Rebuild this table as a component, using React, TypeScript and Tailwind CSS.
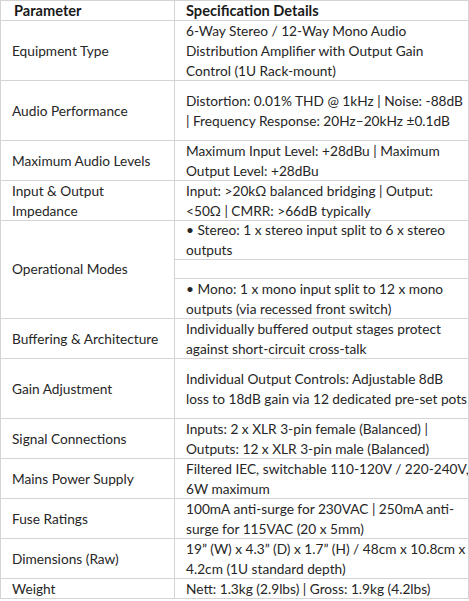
import React from "react";

type Row = { label: React.ReactNode; h: string; lines: string[] };

const rows: Row[] = [
  {
    label: "Equipment Type",
    h: "h-[59px]",
    lines: [
      "6-Way Stereo / 12-Way Mono Audio",
      "Distribution Amplifier with Output Gain",
      "Control (1U Rack-mount)",
    ],
  },
  {
    label: "Audio Performance",
    h: "h-[59px]",
    lines: [
      "Distortion: 0.01% THD @ 1kHz | Noise: -88dB",
      "| Frequency Response: 20Hz\u201320kHz \u00b10.1dB",
    ],
  },
  {
    label: "Maximum Audio Levels",
    h: "h-[39px]",
    lines: ["Maximum Input Level: +28dBu | Maximum", "Output Level: +28dBu"],
  },
  {
    label: (
      <>
        Input &amp; Output
        <br />
        Impedance
      </>
    ),
    h: "h-[39px]",
    lines: [
      "Input: >20k\u03a9 balanced bridging | Output:",
      "<50\u03a9 | CMRR: >66dB typically",
    ],
  },
];

const rows2: Row[] = [
  {
    label: "Buffering & Architecture",
    h: "h-[39px]",
    lines: [
      "Individually buffered output stages protect",
      "against short-circuit cross-talk",
    ],
  },
  {
    label: "Gain Adjustment",
    h: "h-[59px]",
    lines: [
      "Individual Output Controls: Adjustable 8dB",
      "loss to 18dB gain via 12 dedicated pre-set pots",
    ],
  },
  {
    label: "Signal Connections",
    h: "h-[39px]",
    lines: [
      "Inputs: 2 x XLR 3-pin female (Balanced) |",
      "Outputs: 12 x XLR 3-pin male (Balanced)",
    ],
  },
  {
    label: "Mains Power Supply",
    h: "h-[39px]",
    lines: ["Filtered IEC, switchable 110-120V / 220-240V,", "6W maximum"],
  },
  {
    label: "Fuse Ratings",
    h: "h-[39px]",
    lines: [
      "100mA anti-surge for 230VAC | 250mA anti-",
      "surge for 115VAC (20 x 5mm)",
    ],
  },
  {
    label: "Dimensions (Raw)",
    h: "h-[39px]",
    lines: [
      "19\u201d (W) x 4.3\u201d (D) x 1.7\u201d (H) / 48cm x 10.8cm x",
      "4.2cm (1U standard depth)",
    ],
  },
];

function Lines({ lines }: { lines: string[] }) {
  return (
    <div className="whitespace-nowrap">
      {lines.map((l, i) => (
        <div key={i} className="h-[20px] leading-[20px]">
          {l}
        </div>
      ))}
    </div>
  );
}

function TableRow({ r, last }: { r: Row; last?: boolean }) {
  return (
    <div className={`flex ${last ? "" : "border-b border-[#d4d4d4]"}`}>
      <div className={`w-[174px] shrink-0 border-r border-[#d4d4d4] pl-[11px] flex items-center leading-[20px] ${r.h}`}>
        <div>{r.label}</div>
      </div>
      <div className={`flex-1 min-w-0 overflow-hidden pl-[11px] flex items-center ${r.h}`}>
        <Lines lines={r.lines} />
      </div>
    </div>
  );
}

export default function App() {
  return (
    <div className="bg-white w-[469px] h-[601px]">
      <div
        className="w-[469px] border border-[#d4d4d4] text-[13.7px] text-[#262626] overflow-hidden"
        style={{ fontFamily: "Lato, 'Open Sans', sans-serif" }}
      >
        <div className="flex border-b border-[#d4d4d4] font-bold text-[14.6px] text-[#1a1a1a]">
          <div className="w-[174px] shrink-0 border-r border-[#d4d4d4] pl-[13px] h-[19px] leading-[19px]">
            Parameter
          </div>
          <div className="flex-1 pl-[11px] h-[19px] leading-[19px]">
            Specification Details
          </div>
        </div>
        {rows.map((r, i) => (
          <TableRow key={i} r={r} />
        ))}
        <div className="flex border-b border-[#d4d4d4]">
          <div className="w-[174px] shrink-0 border-r border-[#d4d4d4] pl-[11px] flex items-center">
            Operational Modes
          </div>
          <div className="flex-1 min-w-0 flex flex-col">
            <div className="h-[39px] pl-[11px] flex items-center border-b border-[#d4d4d4]">
              <Lines lines={["\u2022 Stereo: 1 x stereo input split to 6 x stereo", "outputs"]} />
            </div>
            <div className="h-[19px] border-b border-[#d4d4d4]" />
            <div className="h-[39px] pl-[11px] flex items-center">
              <Lines lines={["\u2022 Mono: 1 x mono input split to 12 x mono", "outputs (via recessed front switch)"]} />
            </div>
          </div>
        </div>
        {rows2.map((r, i) => (
          <TableRow key={i} r={r} />
        ))}
        <TableRow
          r={{ label: "Weight", h: "h-[19px]", lines: ["Nett: 1.3kg (2.9lbs) | Gross: 1.9kg (4.2lbs)"] }}
          last
        />
      </div>
    </div>
  );
}
